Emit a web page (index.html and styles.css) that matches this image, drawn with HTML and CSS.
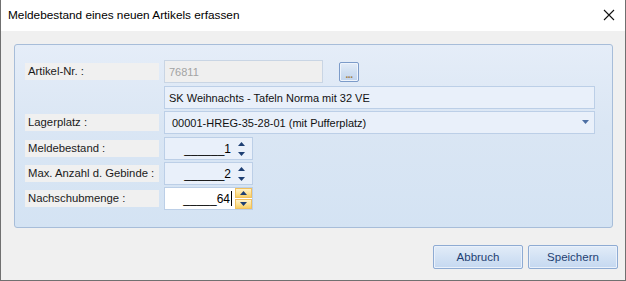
FILE: index.html
```html
<!DOCTYPE html>
<html lang="de">
<head>
  <meta charset="UTF-8">
  <title>Meldebestand eines neuen Artikels erfassen</title>
  <link rel="stylesheet" href="styles.css">
</head>
<body>

  <div class="window">
    <div class="titlebar">
      <span class="title">Meldebestand eines neuen Artikels erfassen</span>
      <svg class="close" width="12" height="12" viewBox="0 0 12 12">
        <path d="M1 1 L11 11 M11 1 L1 11" stroke="#111" stroke-width="1.1" fill="none"/>
      </svg>
    </div>

    <div class="content">
      <div class="panel">
        <div class="row">
          <div class="label">Artikel-Nr. :</div>
          <div class="field disabled short">76811</div>
          <div class="dots-button"><span>...</span></div>
        </div>

        <div class="row row-gap">
          <div class="label blank"></div>
          <div class="field wide">SK Weihnachts - Tafeln Norma mit 32 VE</div>
        </div>

        <div class="row">
          <div class="label">Lagerplatz :</div>
          <div class="field wide combo">
            <span>00001-HREG-35-28-01 (mit Pufferplatz)</span>
            <svg width="8" height="5" viewBox="0 0 8 5"><path d="M0 0 H7 L3.5 4 Z" fill="#4d6fa3"/></svg>
          </div>
        </div>

        <div class="row row-gap">
          <div class="label">Meldebestand :</div>
          <div class="field spin">
            <span class="value">______1</span>
            <div class="arrows">
              <svg width="7" height="4" viewBox="0 0 7 4"><path d="M0 4 L3.5 0 L7 4 Z" fill="#1e3f73"/></svg>
              <svg width="7" height="4" viewBox="0 0 7 4"><path d="M0 0 H7 L3.5 4 Z" fill="#1e3f73"/></svg>
            </div>
          </div>
        </div>

        <div class="row">
          <div class="label">Max. Anzahl d. Gebinde :</div>
          <div class="field spin">
            <span class="value">______2</span>
            <div class="arrows">
              <svg width="7" height="4" viewBox="0 0 7 4"><path d="M0 4 L3.5 0 L7 4 Z" fill="#1e3f73"/></svg>
              <svg width="7" height="4" viewBox="0 0 7 4"><path d="M0 0 H7 L3.5 4 Z" fill="#1e3f73"/></svg>
            </div>
          </div>
        </div>

        <div class="row">
          <div class="label">Nachschubmenge :</div>
          <div class="field spin focused">
            <span class="value">_____64<i class="caret"></i></span>
            <div class="spin-buttons">
              <div class="spin-btn"><svg width="7" height="4" viewBox="0 0 7 4"><path d="M0 4 L3.5 0 L7 4 Z" fill="#1e3f73"/></svg></div>
              <div class="spin-btn"><svg width="7" height="4" viewBox="0 0 7 4"><path d="M0 0 H7 L3.5 4 Z" fill="#1e3f73"/></svg></div>
            </div>
          </div>
        </div>
      </div>

      <div class="actions">
        <button class="button">Abbruch</button>
        <button class="button">Speichern</button>
      </div>
    </div>
  </div>

</body>
</html>
```

FILE: styles.css
```css
body {
  margin: 0;
  font-family: 'Liberation Sans', Arial, sans-serif;
  font-size: 11px;
  color: #111;
  background: #f0f0f0;
}

.window {
  width: 626px;
  height: 281px;
  box-sizing: border-box;
  border: 1px solid #707070;
  border-top: none;
  background: #f0f0f0;
  display: flex;
  flex-direction: column;
}

.titlebar {
  height: 31px;
  background: #fff;
  display: flex;
  align-items: center;
  justify-content: space-between;
  padding: 0 10px 0 7px;
  flex-shrink: 0;
}

.title {
  font-size: 11.8px;
  color: #000;
  margin-top: -1px;
}

.close {
  margin-top: -1px;
}

.content {
  padding: 13px 12px 0 13px;
  display: flex;
  flex-direction: column;
}

.panel {
  height: 184px;
  box-sizing: border-box;
  border: 1px solid #a7bdd9;
  border-radius: 3px;
  background: linear-gradient(to bottom, #e5edf8 0%, #dae6f4 45%, #d4e3f3 100%);
  padding: 15px 17px 0 10px;
  display: flex;
  flex-direction: column;
  gap: 2px;
}

.row {
  display: flex;
  align-items: center;
  gap: 5px;
}

.row-gap {
  margin-top: 1px;
}

.label {
  width: 134px;
  height: 17px;
  line-height: 17px;
  padding-left: 3px;
  box-sizing: border-box;
  background: #f0f0f0;
  color: #1a1a1a;
  font-size: 11.3px;
  white-space: nowrap;
}

.label.blank {
  background: transparent;
}

.field {
  height: 23px;
  box-sizing: border-box;
  border: 1px solid #bccfe7;
  background: #e9f0fa;
  display: flex;
  align-items: center;
  padding: 0 4px;
  white-space: nowrap;
}

.field.short {
  width: 159px;
}

.field.wide {
  flex: 1;
}

.field.disabled {
  background: #efefef;
  border-color: #c9d5e4;
  color: #a3a3a3;
}

.combo {
  justify-content: space-between;
  padding: 0 4px 0 7px;
}

.dots-button {
  width: 20px;
  height: 20px;
  box-sizing: border-box;
  margin-left: 11px;
  border: 1px solid #7c9bc9;
  border-radius: 2px;
  background: linear-gradient(to bottom, #e3ecf8 0%, #d0dff1 50%, #c2d5ee 100%);
  box-shadow: inset 0 0 0 1px #eef4fc;
  display: flex;
  align-items: flex-end;
  justify-content: center;
  font-size: 10px;
  font-weight: bold;
  line-height: 13px;
  color: #a07c45;
  letter-spacing: -0.5px;
}

.spin {
  width: 89px;
  padding: 0 4px 0 0;
  justify-content: flex-end;
  color: #000;
  font-size: 12px;
}

.spin .value {
  display: flex;
  align-items: center;
}

.arrows {
  width: 14px;
  height: 21px;
  margin-left: 3px;
  display: flex;
  flex-direction: column;
  justify-content: space-between;
  align-items: center;
  padding: 4px 0 3px;
  box-sizing: border-box;
}

.spin.focused {
  background: #fff;
  padding-right: 0;
}

.caret {
  display: inline-block;
  width: 1px;
  height: 15px;
  background: #000;
  margin-left: 1px;
}

.spin-buttons {
  width: 17px;
  height: 21px;
  margin-left: 3px;
  display: flex;
  flex-direction: column;
  gap: 1px;
  background: #fff;
}

.spin-btn {
  flex: 1;
  border: 1px solid #f1c15f;
  background: linear-gradient(to bottom, #fff2c8 0%, #fde39a 50%, #f8cf63 100%);
  display: flex;
  align-items: center;
  justify-content: center;
}

.actions {
  display: flex;
  justify-content: flex-end;
  gap: 5px;
  margin-top: 17px;
  margin-right: -5px;
}

.button {
  width: 90px;
  height: 24px;
  font-family: 'Liberation Sans', Arial, sans-serif;
  font-size: 11.5px;
  color: #1e3f73;
  border: 1px solid #8eabd3;
  border-radius: 2px;
  background: linear-gradient(to bottom, #e2ecf8 0%, #d3e2f4 50%, #c5d8f0 100%);
  box-shadow: inset 0 0 0 1px #eaf1fb;
  padding: 0;
}
```
